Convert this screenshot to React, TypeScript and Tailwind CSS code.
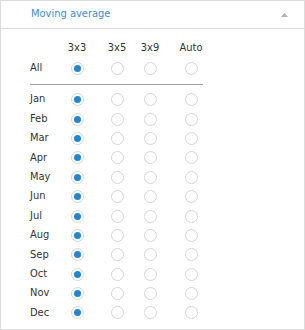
import React from "react";

const months = ["Jan","Feb","Mar","Apr","May","Jun","Jul","Aug","Sep","Oct","Nov","Dec"];

function Radio({ checked }: { checked?: boolean }) {
  return (
    <div className="w-[13px] h-[13px] rounded-full border border-[#d6d6d6] bg-white flex items-center justify-center">
      {checked && <div className="w-[7px] h-[7px] rounded-full bg-[#1f88d4]" />}
    </div>
  );
}

function Row({ label, h }: { label: string; h: string }) {
  return (
    <div className={`grid grid-cols-[27px_40px_40px_26px_56px] items-center ${h}`}>
      <div className="text-[#333]">{label}</div>
      <div className="flex justify-center"><Radio checked /></div>
      <div className="flex justify-center"><Radio /></div>
      <div className="flex justify-center"><Radio /></div>
      <div className="flex justify-center"><Radio /></div>
    </div>
  );
}

export default function App() {
  return (
    <div
      className="w-[305px] h-[330px] border border-[#dcdcdc] bg-white text-[11px]"
      style={{ fontFamily: '"DejaVu Sans Condensed", "DejaVu Sans", sans-serif' }}
    >
      <div className="h-[28px] border-b border-[#dcdcdc] flex items-center justify-between pl-[30px] pr-[16px]">
        <span className="text-[#3a8fd8] text-[11px]">Moving average</span>
        <svg width="7" height="4" viewBox="0 0 7 4"><polygon points="3.5,0 7,4 0,4" fill="#b0b0b0" /></svg>
      </div>
      <div className="pl-[29px] pt-[9px]">
        <div className="grid grid-cols-[27px_40px_40px_26px_56px] items-center h-[20px] text-[#333]">
          <div />
          <div className="text-center">3x3</div>
          <div className="text-center">3x5</div>
          <div className="text-center">3x9</div>
          <div className="text-center">Auto</div>
        </div>
        <Row label="All" h="h-[20px]" />
        <div className="mt-[6px] w-[173px] h-px bg-[#a0a0a0]" />
        <div className="mt-[5px]">
          {months.map((m) => (
            <Row key={m} label={m} h="h-[19.4px]" />
          ))}
        </div>
      </div>
    </div>
  );
}
